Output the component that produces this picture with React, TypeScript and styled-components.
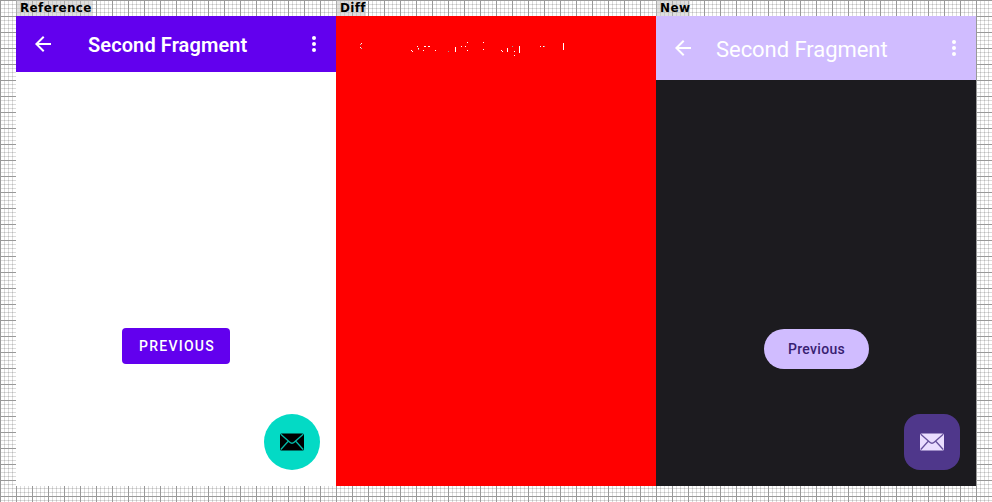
import React from "react";
import styled, { createGlobalStyle } from "styled-components";

const GlobalStyle = createGlobalStyle`
  * { box-sizing: border-box; }
  html, body { margin: 0; padding: 0; }
  body { width: 992px; height: 502px; overflow: hidden; background: #fff; }
`;

const Sheet = styled.main`
  width: 992px;
  height: 502px;
  padding: 0 16px 16px;
  display: flex;
  background-color: #fff;
  background-image:
    linear-gradient(to right, #999 1px, transparent 1px),
    linear-gradient(to bottom, #999 1px, transparent 1px),
    linear-gradient(to right, rgba(0, 0, 0, 0.14) 1px, transparent 1px),
    linear-gradient(to bottom, rgba(0, 0, 0, 0.14) 1px, transparent 1px);
  background-size: 16px 16px, 16px 16px, 4px 4px, 4px 4px;
`;

const Column = styled.section`
  width: 320px;
  display: flex;
  flex-direction: column;
  align-items: flex-start;
`;

const Caption = styled.div`
  height: 16px;
  padding: 1px 0 0 4px;
  font: bold 12px/15px "DejaVu Sans", sans-serif;
  letter-spacing: 0.35px;
  color: #000;
  background: rgba(192, 192, 192, 0.5);
  white-space: nowrap;
`;

type Variant = { $modern?: boolean };

const Screen = styled.div<Variant>`
  width: 320px;
  height: 470px;
  display: flex;
  flex-direction: column;
  background: ${(p) => (p.$modern ? "#1c1b1f" : "#fff")};
  font-family: Roboto, sans-serif;
`;

const AppBar = styled.header<Variant>`
  height: ${(p) => (p.$modern ? 64 : 56)}px;
  flex: none;
  display: flex;
  align-items: center;
  padding: 0 10px 0 15px;
  color: #fff;
  background: ${(p) => (p.$modern ? "#d0bcff" : "#6200ee")};
  svg { flex: none; }
`;

const Title = styled.h1<Variant>`
  flex: 1;
  margin: 0;
  padding: ${(p) => (p.$modern ? "3px 0 0 21px" : "2px 0 0 33px")};
  font-size: ${(p) => (p.$modern ? 22 : 20)}px;
  font-weight: ${(p) => (p.$modern ? 400 : 600)};
  line-height: 28px;
  letter-spacing: ${(p) => (p.$modern ? -0.05 : 0.1)}px;
  white-space: nowrap;
`;

const Content = styled.div<Variant>`
  flex: 1;
  display: flex;
  flex-direction: column;
  align-items: flex-start;
  padding: ${(p) => (p.$modern ? "249px 16px 16px 108px" : "256px 16px 16px 106px")};
`;

const Button = styled.button<Variant>`
  width: ${(p) => (p.$modern ? 105 : 108)}px;
  height: ${(p) => (p.$modern ? 40 : 36)}px;
  padding: ${(p) => (p.$modern ? "0" : "0 0 0 2px")};
  border: 0;
  border-radius: ${(p) => (p.$modern ? 20 : 4)}px;
  background: ${(p) => (p.$modern ? "#d0bcff" : "#6200ee")};
  color: ${(p) => (p.$modern ? "#381e72" : "#fff")};
  font: 500 14px/20px Roboto, sans-serif;
  letter-spacing: ${(p) => (p.$modern ? 0.3 : 1.25)}px;
`;

const Fab = styled.button<Variant>`
  width: 56px;
  height: 56px;
  margin-top: auto;
  align-self: flex-end;
  display: grid;
  place-items: center;
  padding: 0;
  border: 0;
  border-radius: ${(p) => (p.$modern ? "16px" : "50%")};
  background: ${(p) => (p.$modern ? "#4f378b" : "#03dac5")};
  color: ${(p) => (p.$modern ? "#eaddff" : "#000")};
`;

const DiffSurface = styled.svg`
  display: block;
  background: #f00;
`;

const BackIcon = () => (
  <svg width="24" height="24" viewBox="0 0 24 24" fill="currentColor">
    <path d="M20 11H7.83l5.59-5.59L12 4l-8 8 8 8 1.41-1.41L7.83 13H20z" />
  </svg>
);

const MoreIcon = () => (
  <svg width="24" height="24" viewBox="0 0 24 24" fill="currentColor">
    <circle cx="12" cy="6" r="2" />
    <circle cx="12" cy="12" r="2" />
    <circle cx="12" cy="18" r="2" />
  </svg>
);

const MailIcon = ({ line }: { line: string }) => (
  <svg width="24" height="18" viewBox="0 0 24 18">
    <rect y="0.5" width="24" height="17" rx="1.5" fill="currentColor" />
    <path
      d="M.8 1.3 9.5 9q2.5 2.4 5 0l8.7-7.7M.8 16.5 8 8.5M23.2 16.5 16 8.5"
      fill="none"
      stroke={line}
      strokeWidth="1.3"
      opacity="0.85"
    />
  </svg>
);

// Unchanged pixels inside the diff area: x, y, width, height, colour.
const marks: [number, number, number, number, string?][] = [
  [24, 28, 1, 1, "#bbb"], [25, 27, 1, 1], [24, 31, 1, 1], [25, 32, 1, 1, "#bbb"],
  [75, 34, 1, 1], [76, 35, 1, 1], [81, 30, 1, 1], [82, 32, 1, 1],
  [82, 33, 1, 1, "#aaa"], [87, 34, 1, 1], [88, 30, 2, 1], [92, 30, 2, 1],
  [99, 34, 1, 1], [112, 35, 1, 1, "#999"], [119, 31, 1, 5],
  [125, 30, 1, 1], [129, 30, 1, 1], [131, 26, 1, 1], [131, 34, 1, 1],
  [147, 26, 1, 1], [147, 33, 1, 1], [165, 34, 1, 1], [166, 35, 1, 1],
  [171, 32, 1, 4], [176, 30, 1, 1, "#999"], [178, 35, 1, 1],
  [178, 39, 1, 1], [183, 30, 1, 7], [204, 30, 1, 1], [207, 30, 1, 1],
  [208, 30, 1, 1, "#aaa"], [227, 27, 1, 7],
];

export default function App() {
  return (
    <>
      <GlobalStyle />
      <Sheet>
        <Column>
          <Caption>Reference</Caption>
          <Screen>
            <AppBar>
              <BackIcon />
              <Title>Second Fragment</Title>
              <MoreIcon />
            </AppBar>
            <Content>
              <Button>PREVIOUS</Button>
              <Fab><MailIcon line="#03dac5" /></Fab>
            </Content>
          </Screen>
        </Column>
        <Column>
          <Caption>Diff</Caption>
          <DiffSurface width="320" height="470" shapeRendering="crispEdges">
            {marks.map(([x, y, w, h, fill = "#fff"]) => (
              <rect key={`${x}-${y}`} x={x} y={y} width={w} height={h} fill={fill} />
            ))}
          </DiffSurface>
        </Column>
        <Column>
          <Caption>New</Caption>
          <Screen $modern>
            <AppBar $modern>
              <BackIcon />
              <Title $modern>Second Fragment</Title>
              <MoreIcon />
            </AppBar>
            <Content $modern>
              <Button $modern>Previous</Button>
              <Fab $modern><MailIcon line="#4f378b" /></Fab>
            </Content>
          </Screen>
        </Column>
      </Sheet>
    </>
  );
}
